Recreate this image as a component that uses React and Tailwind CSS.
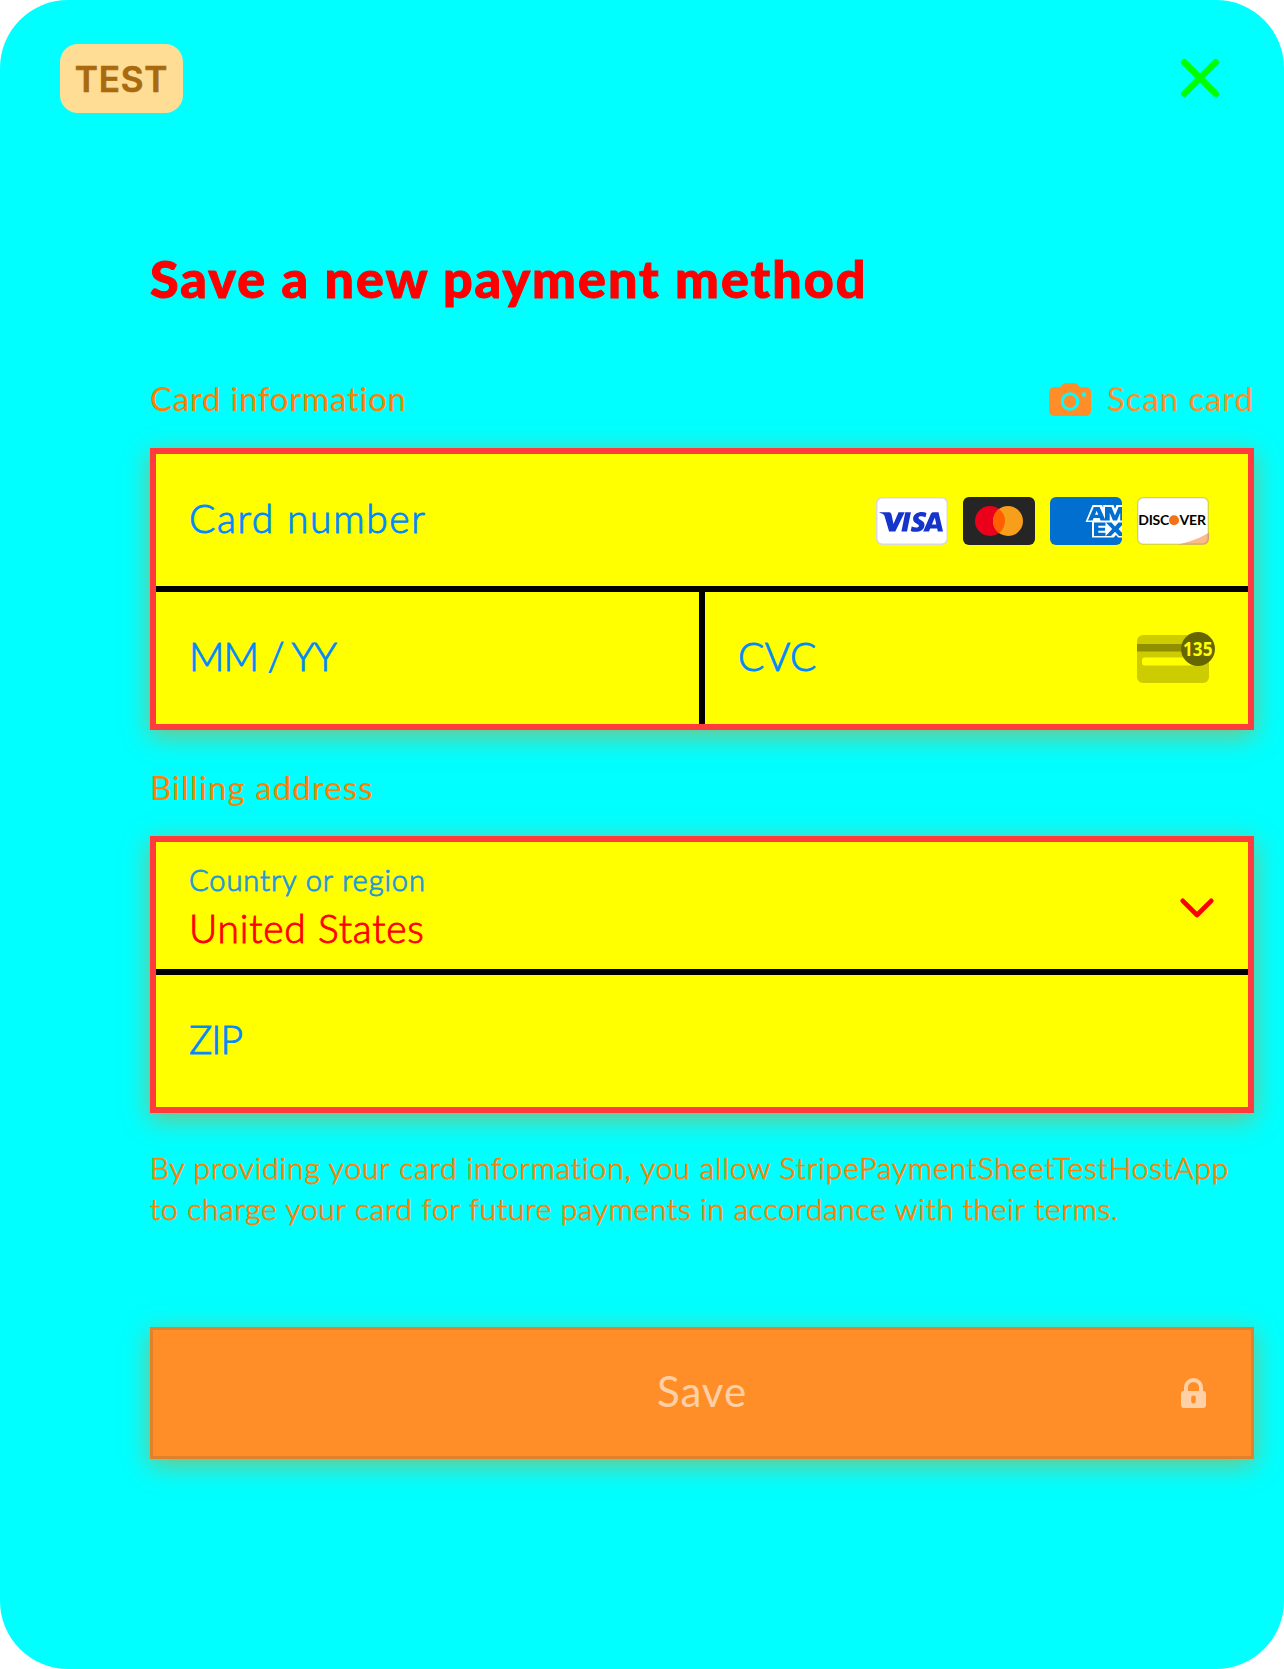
import React from "react";

const shadow = "shadow-[0_6px_24px_rgba(255,128,0,0.5)]";
const book = "font-light [-webkit-text-stroke:0.9px_currentColor]";

function Visa() {
  return (
    <svg width="72" height="48" viewBox="0 0 72 48">
      <rect x="0.75" y="0.75" width="70.5" height="46.5" rx="5.5" fill="#fff" stroke="#d9d9d9" strokeWidth="1.5" />
      <g fill="#1434cb">
        <path d="M3.500 15.200h9c1.500 0 2.600.6 3 2.200l2 9.600 5-11.800h6.200L19.300 34.500h-6.200L8.600 19.200C8 17.200 6 16.400 3.500 15.800z" />
        <path d="M29.300 15.200h5.600L31 34.500h-5.600z" />
        <path d="M50.500 15.900l-1 4.300c-3-1.300-7-1.500-7 .5 0 2.200 6 2.500 6 7 0 6.800-8.500 8.300-13.800 6.200l1-4.500c3.500 1.700 7.300 1.500 7.300-.6 0-2.300-5.900-2.300-5.900-6.900 0-5.700 7.400-8.200 13.400-6z" />
        <path fillRule="evenodd" d="M57.500 15.200h5L67 34.500h-5.200l-.6-3h-7l-1.200 3h-5.800l7.600-17.500c.5-1.200 1.400-1.800 2.700-1.800zm1.300 5.200l-2.900 7h4.400z" />
      </g>
    </svg>
  );
}

function Mastercard() {
  return (
    <svg width="72" height="48" viewBox="0 0 72 48">
      <rect width="72" height="48" rx="6" fill="#252525" />
      <circle cx="27" cy="24" r="15" fill="#eb001b" />
      <circle cx="45" cy="24" r="15" fill="#f79e1b" />
      <path d="M36 12a15 15 0 0 1 0 24a15 15 0 0 1 0-24z" fill="#ff5f00" />
    </svg>
  );
}

function Amex() {
  return (
    <svg width="72" height="48" viewBox="0 0 72 48">
      <rect width="72" height="48" rx="6" fill="#016fd0" />
      <path
        fill="#fff"
        d="M42.500 8H52l1.200 2.500V8h10.300l1.500 4 1.500-4H72v32.500h-3.800L66 38l-2.300 2.500H42V25h-6.500z"
      />
      <g fill="#016fd0">
        <path fillRule="evenodd" d="M43.800 10h5.800l6 13.500h-5l-1-2.500h-6l-1 2.500h-4.700zm2.800 3.800L45 17.800h3.300z" />
        <path d="M55 10h6.500L65 18.500 68.500 10H72v13.500h-1.800v-7.700L67 23.500h-4l-3.300-7.700v7.700H55z" />
        <path d="M44 25.500h11.500v3.200H48.300v2H55v3h-6.700v2h7.200v3.300H44z" />
        <path d="M56 25.500h5.500l3.500 3.900 3.500-3.900H72v2.700l-3.500 3.900 3.500 3.700V39h-3l-4-4.200L61 39h-5.300l6.500-6.900z" />
      </g>
    </svg>
  );
}

function Discover() {
  return (
    <svg width="72" height="48" viewBox="0 0 72 48">
      <rect x="0.75" y="0.75" width="70.5" height="46.5" rx="5.5" fill="#fff" />
      <path d="M40 47.500C52 45.500 63 41 72 35.500V42a5.500 5.500 0 0 1-5.500 5.500z" fill="#fabb8b" />
      <rect x="0.75" y="0.75" width="70.5" height="46.5" rx="5.5" fill="none" stroke="#000" strokeOpacity=".15" strokeWidth="1.500" />
      <text x="1.300" y="28.200" fontFamily="Lato, sans-serif" fontWeight="700" fontSize="14" textLength="31" fill="#000">DISC</text>
      <circle cx="37" cy="23.300" r="5" fill="#f47216" />
      <text x="42.500" y="28.200" fontFamily="Lato, sans-serif" fontWeight="700" fontSize="14" textLength="26.500" fill="#000">VER</text>
    </svg>
  );
}

function CvcIcon() {
  return (
    <svg width="80" height="52" viewBox="0 0 80 52">
      <rect x="0" y="3" width="72" height="48" rx="6" fill="#cccc00" />
      <rect x="0" y="12" width="72" height="7.500" fill="#8f8f00" />
      <rect x="5" y="25.500" width="56" height="8" rx="2.500" fill="#ffff00" />
      <circle cx="61" cy="17" r="17" fill="#666600" />
      <text x="46" y="24" fontFamily="'Noto Sans', sans-serif" fontWeight="700" fontSize="19.500" textLength="29.500" lengthAdjust="spacingAndGlyphs" fill="#ffff00">135</text>
    </svg>
  );
}

export default function App() {
  return (
    <div className="h-[1669px] w-[1284px] overflow-hidden rounded-[68px] bg-[#00ffff] font-['Lato',sans-serif] whitespace-nowrap">
      <header className="flex h-[157px] items-start justify-between pt-[44px] pr-[64px] pl-[60px]">
        <div className="flex h-[69px] w-[123px] items-center justify-center rounded-[18px] bg-[#ffdd94] pt-px font-['Inter',sans-serif] text-[35px] leading-none font-semibold tracking-[0.8px] text-[#a8690f] [-webkit-text-stroke:0.6px_currentColor]">
          TEST
        </div>
        <svg className="mt-[14px]" width="40" height="40" viewBox="0 0 40 40" stroke="#00ff00" strokeWidth="6.500" strokeLinecap="round">
          <path d="M4.300 4.300L35.700 35.700M35.700 4.300L4.300 35.700" />
        </svg>
      </header>

      <main className="ml-[150px] w-[1104px]">
        <h1 className="mt-[91px] h-[60px] text-[52px] leading-[60px] font-black tracking-[2.02px] text-[#ff0000] [-webkit-text-stroke:1px_currentColor]">
          Save a new payment method
        </h1>

        <div className="mt-[70px] flex h-[40px] items-center justify-between leading-[40px]">
          <h2 className="text-[33px] tracking-[0.75px] text-[#ff8000]">Card information</h2>
          <button className="flex items-center gap-[16px] text-[33px] tracking-[0.9px] text-[#ff8e28]">
            <svg className="mt-[2px]" width="42" height="33" viewBox="0 0 42 33">
              <path
                fill="#ff8e28"
                fillRule="evenodd"
                d="M5 4h6l3-3q1-1 2.500-1h9Q27 0 28 1l3 3h6a5 5 0 0 1 5 5v19a5 5 0 0 1-5 5H5a5 5 0 0 1-5-5V9a5 5 0 0 1 5-5zM21 9.200a9.300 9.300 0 1 0 0 18.600a9.300 9.300 0 1 0 0-18.600zM35 9.300a2.200 2.200 0 1 0 0 4.400a2.200 2.200 0 1 0 0-4.400z"
              />
              <circle cx="21" cy="18.500" r="6.200" fill="#ff8e28" />
            </svg>
            <span>Scan card</span>
          </button>
        </div>

        <section className={`mt-[30px] h-[282px] border-[6px] border-[#ff3b3b] bg-[#ffff00] text-[39px] text-[#0088ff] ${shadow}`}>
          <div className="flex h-[138px] items-center justify-between border-b-[6px] border-black pr-[39px] pl-[33px]">
            <span className={`pb-[3px] tracking-[1.6px] ${book}`}>Card number</span>
            <div className="flex gap-[15px] pt-[2px]">
              <Visa />
              <Mastercard />
              <Amex />
              <Discover />
            </div>
          </div>
          <div className="flex h-[132px]">
            <div className="flex w-[549px] items-center border-r-[6px] border-black pl-[33px]">
              <span className={`pb-[4px] tracking-[-1px] ${book}`}>MM / YY</span>
            </div>
            <div className="flex flex-1 items-center justify-between pr-[31px] pl-[33px]">
              <span className={`pb-[4px] tracking-[0.3px] ${book}`}>CVC</span>
              <CvcIcon />
            </div>
          </div>
        </section>

        <h2 className="mt-[37px] h-[40px] text-[33px] leading-[40px] tracking-[1.1px] text-[#ff8000]">Billing address</h2>

        <section className={`mt-[29px] h-[277px] border-[6px] border-[#ff3b3b] bg-[#ffff00] ${shadow}`}>
          <div className="flex h-[133px] items-center justify-between border-b-[6px] border-black pr-[34px] pl-[33px]">
            <div className="pt-[5px]">
              <div className={`text-[29px] leading-[40px] tracking-[0.95px] text-[#1f98d9] ${book}`}>Country or region</div>
              <div className={`text-[39px] leading-[56px] tracking-[0.75px] text-[#ff0000] ${book}`}>United States</div>
            </div>
            <svg className="mt-[5px]" width="34" height="20" viewBox="0 0 34 20" fill="none" stroke="#ff0000" strokeWidth="4.700" strokeLinecap="round" strokeLinejoin="round">
              <path d="M2.800 2.800L17 17L31.200 2.800" />
            </svg>
          </div>
          <div className="flex h-[132px] items-center pl-[33px] text-[39px] text-[#0088ff]">
            <span className={`pb-[4px] tracking-[-1px] ${book}`}>ZIP</span>
          </div>
        </section>

        <p className="mt-[34px] h-[82px] text-[30px] leading-[41px] font-light text-[#ff8000] [-webkit-text-stroke:0.75px_currentColor]">
          <span className="block tracking-[0.85px]">By providing your card information, you allow StripePaymentSheetTestHostApp</span>
          <span className="block tracking-[0.7px]">to charge your card for future payments in accordance with their terms.</span>
        </p>

        <button className={`mt-[98px] grid h-[132px] w-full grid-cols-[1fr_auto_1fr] items-center border-[3px] border-[#e0822c] bg-[#ff8e28] pr-[45px] text-[42px] text-[#ffd0a5] ${shadow}`}>
          <span className="col-start-2 pb-[4px] pl-[45px] tracking-[1px]">Save</span>
          <svg className="justify-self-end" width="25" height="30" viewBox="0 0 25 30">
            <path d="M5 14V9.500a7.500 7.500 0 0 1 15 0V14" fill="none" stroke="#ffd0a5" strokeWidth="4" />
            <path fill="#ffd0a5" fillRule="evenodd" d="M3 13h19a3 3 0 0 1 3 3v11a3 3 0 0 1-3 3H3a3 3 0 0 1-3-3V16a3 3 0 0 1 3-3zM12.500 17.500a2.300 2.300 0 0 0-2.300 2.300v3.400a2.300 2.300 0 0 0 4.600 0v-3.400a2.300 2.300 0 0 0-2.300-2.300z" />
          </svg>
        </button>
      </main>
    </div>
  );
}
